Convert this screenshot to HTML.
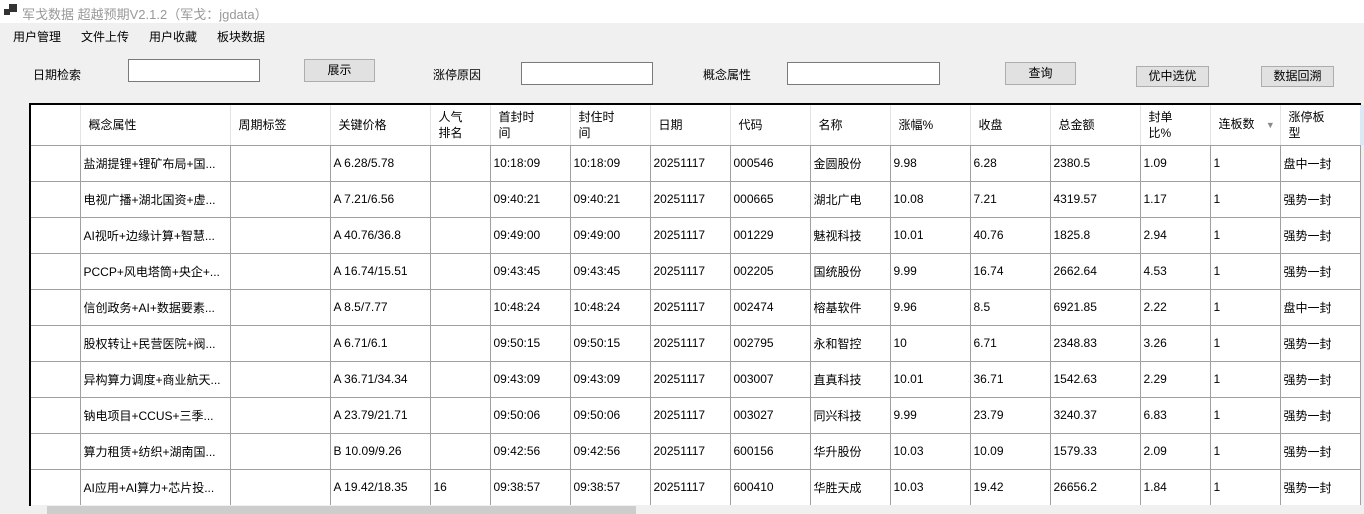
<!DOCTYPE html>
<html><head><meta charset="utf-8"><style>
*{margin:0;padding:0;box-sizing:border-box}
body{width:1364px;height:514px;overflow:hidden;background:#f0f0f0;font-family:"Liberation Sans","Microsoft YaHei","Noto Sans CJK SC",sans-serif;font-size:12px;color:#000;position:relative}
.a{position:absolute;white-space:nowrap}
.title{left:0;top:0;width:1364px;height:23px;background:#fff}
.btn{position:absolute;background:#e1e1e1;border:1px solid #adadad;text-align:center;font-size:12px}
.inp{position:absolute;background:#fff;border:1px solid #7a7a7a}
table{position:absolute;left:29px;top:103px;border-collapse:collapse;table-layout:fixed;background:#fff;border-top:2px solid #000;border-left:2px solid #000}
td{height:36px;border:1px solid #a0a0a0;padding-left:3px;white-space:nowrap;overflow:hidden;font-size:12px}
tr.h td{height:41px;border-color:#e3e3e3;border-bottom:1px solid #a0a0a0;line-height:16px;vertical-align:middle}
</style></head><body>
<div class="a title"></div>
<div class="a" style="left:4px;top:9px;width:6px;height:6px;background:#333"></div>
<div class="a" style="left:9px;top:4px;width:8px;height:8px;background:#333"></div>
<div class="a" style="left:22px;top:4px;color:#999;font-size:13px">军戈数据 超越预期V2.1.2（军戈：jgdata）</div>
<div class="a" style="left:13px;top:28px">用户管理</div>
<div class="a" style="left:81px;top:28px">文件上传</div>
<div class="a" style="left:149px;top:28px">用户收藏</div>
<div class="a" style="left:217px;top:28px">板块数据</div>
<div class="a" style="left:33px;top:66px">日期检索</div>
<div class="inp" style="left:128px;top:59px;width:132px;height:23px"></div>
<div class="btn" style="left:304px;top:59px;width:71px;height:23px;line-height:21px">展示</div>
<div class="a" style="left:433px;top:66px">涨停原因</div>
<div class="inp" style="left:521px;top:62px;width:132px;height:23px"></div>
<div class="a" style="left:703px;top:66px">概念属性</div>
<div class="inp" style="left:787px;top:62px;width:153px;height:23px"></div>
<div class="btn" style="left:1005px;top:62px;width:71px;height:23px;line-height:21px">查询</div>
<div class="btn" style="left:1136px;top:66px;width:73px;height:21px;line-height:19px">优中选优</div>
<div class="btn" style="left:1261px;top:66px;width:73px;height:21px;line-height:19px">数据回溯</div>
<table>
<colgroup><col style="width:50px"><col style="width:150px"><col style="width:100px"><col style="width:100px"><col style="width:60px"><col style="width:80px"><col style="width:80px"><col style="width:80px"><col style="width:80px"><col style="width:80px"><col style="width:80px"><col style="width:80px"><col style="width:90px"><col style="width:70px"><col style="width:70px"><col style="width:80px"></colgroup>
<tr class="h"><td></td><td style="padding-left:8px">概念属性</td><td style="padding-left:8px">周期标签</td><td style="padding-left:8px">关键价格</td><td style="padding-left:8px">人气<br>排名</td><td style="padding-left:8px">首封时<br>间</td><td style="padding-left:8px">封住时<br>间</td><td style="padding-left:8px">日期</td><td style="padding-left:8px">代码</td><td style="padding-left:8px">名称</td><td style="padding-left:8px">涨幅%</td><td style="padding-left:8px">收盘</td><td style="padding-left:8px">总金额</td><td style="padding-left:8px">封单<br>比%</td><td style="padding-left:8px">连板数 <span style="color:#888;font-size:9px;margin-left:8px">▼</span></td><td style="padding-left:8px">涨停板<br>型</td></tr>
<tr><td></td><td>盐湖提锂+锂矿布局+国...</td><td></td><td>A 6.28/5.78</td><td></td><td>10:18:09</td><td>10:18:09</td><td>20251117</td><td>000546</td><td>金圆股份</td><td>9.98</td><td>6.28</td><td>2380.5</td><td>1.09</td><td>1</td><td>盘中一封</td></tr>
<tr><td></td><td>电视广播+湖北国资+虚...</td><td></td><td>A 7.21/6.56</td><td></td><td>09:40:21</td><td>09:40:21</td><td>20251117</td><td>000665</td><td>湖北广电</td><td>10.08</td><td>7.21</td><td>4319.57</td><td>1.17</td><td>1</td><td>强势一封</td></tr>
<tr><td></td><td>AI视听+边缘计算+智慧...</td><td></td><td>A 40.76/36.8</td><td></td><td>09:49:00</td><td>09:49:00</td><td>20251117</td><td>001229</td><td>魅视科技</td><td>10.01</td><td>40.76</td><td>1825.8</td><td>2.94</td><td>1</td><td>强势一封</td></tr>
<tr><td></td><td>PCCP+风电塔筒+央企+...</td><td></td><td>A 16.74/15.51</td><td></td><td>09:43:45</td><td>09:43:45</td><td>20251117</td><td>002205</td><td>国统股份</td><td>9.99</td><td>16.74</td><td>2662.64</td><td>4.53</td><td>1</td><td>强势一封</td></tr>
<tr><td></td><td>信创政务+AI+数据要素...</td><td></td><td>A 8.5/7.77</td><td></td><td>10:48:24</td><td>10:48:24</td><td>20251117</td><td>002474</td><td>榕基软件</td><td>9.96</td><td>8.5</td><td>6921.85</td><td>2.22</td><td>1</td><td>盘中一封</td></tr>
<tr><td></td><td>股权转让+民营医院+阀...</td><td></td><td>A 6.71/6.1</td><td></td><td>09:50:15</td><td>09:50:15</td><td>20251117</td><td>002795</td><td>永和智控</td><td>10</td><td>6.71</td><td>2348.83</td><td>3.26</td><td>1</td><td>强势一封</td></tr>
<tr><td></td><td>异构算力调度+商业航天...</td><td></td><td>A 36.71/34.34</td><td></td><td>09:43:09</td><td>09:43:09</td><td>20251117</td><td>003007</td><td>直真科技</td><td>10.01</td><td>36.71</td><td>1542.63</td><td>2.29</td><td>1</td><td>强势一封</td></tr>
<tr><td></td><td>钠电项目+CCUS+三季...</td><td></td><td>A 23.79/21.71</td><td></td><td>09:50:06</td><td>09:50:06</td><td>20251117</td><td>003027</td><td>同兴科技</td><td>9.99</td><td>23.79</td><td>3240.37</td><td>6.83</td><td>1</td><td>强势一封</td></tr>
<tr><td></td><td>算力租赁+纺织+湖南国...</td><td></td><td>B 10.09/9.26</td><td></td><td>09:42:56</td><td>09:42:56</td><td>20251117</td><td>600156</td><td>华升股份</td><td>10.03</td><td>10.09</td><td>1579.33</td><td>2.09</td><td>1</td><td>强势一封</td></tr>
<tr><td></td><td>AI应用+AI算力+芯片投...</td><td></td><td>A 19.42/18.35</td><td>16</td><td>09:38:57</td><td>09:38:57</td><td>20251117</td><td>600410</td><td>华胜天成</td><td>10.03</td><td>19.42</td><td>26656.2</td><td>1.84</td><td>1</td><td>强势一封</td></tr>
</table>
<div class="a" style="left:31px;top:505px;width:1333px;height:9px;background:#f0f0f0"></div>
<div class="a" style="left:47px;top:506px;width:589px;height:8px;background:#cdcdcd"></div>
<div class="a" style="left:1360px;top:105px;width:4px;height:40px;background:#dbe8f5"></div>
</body></html>
